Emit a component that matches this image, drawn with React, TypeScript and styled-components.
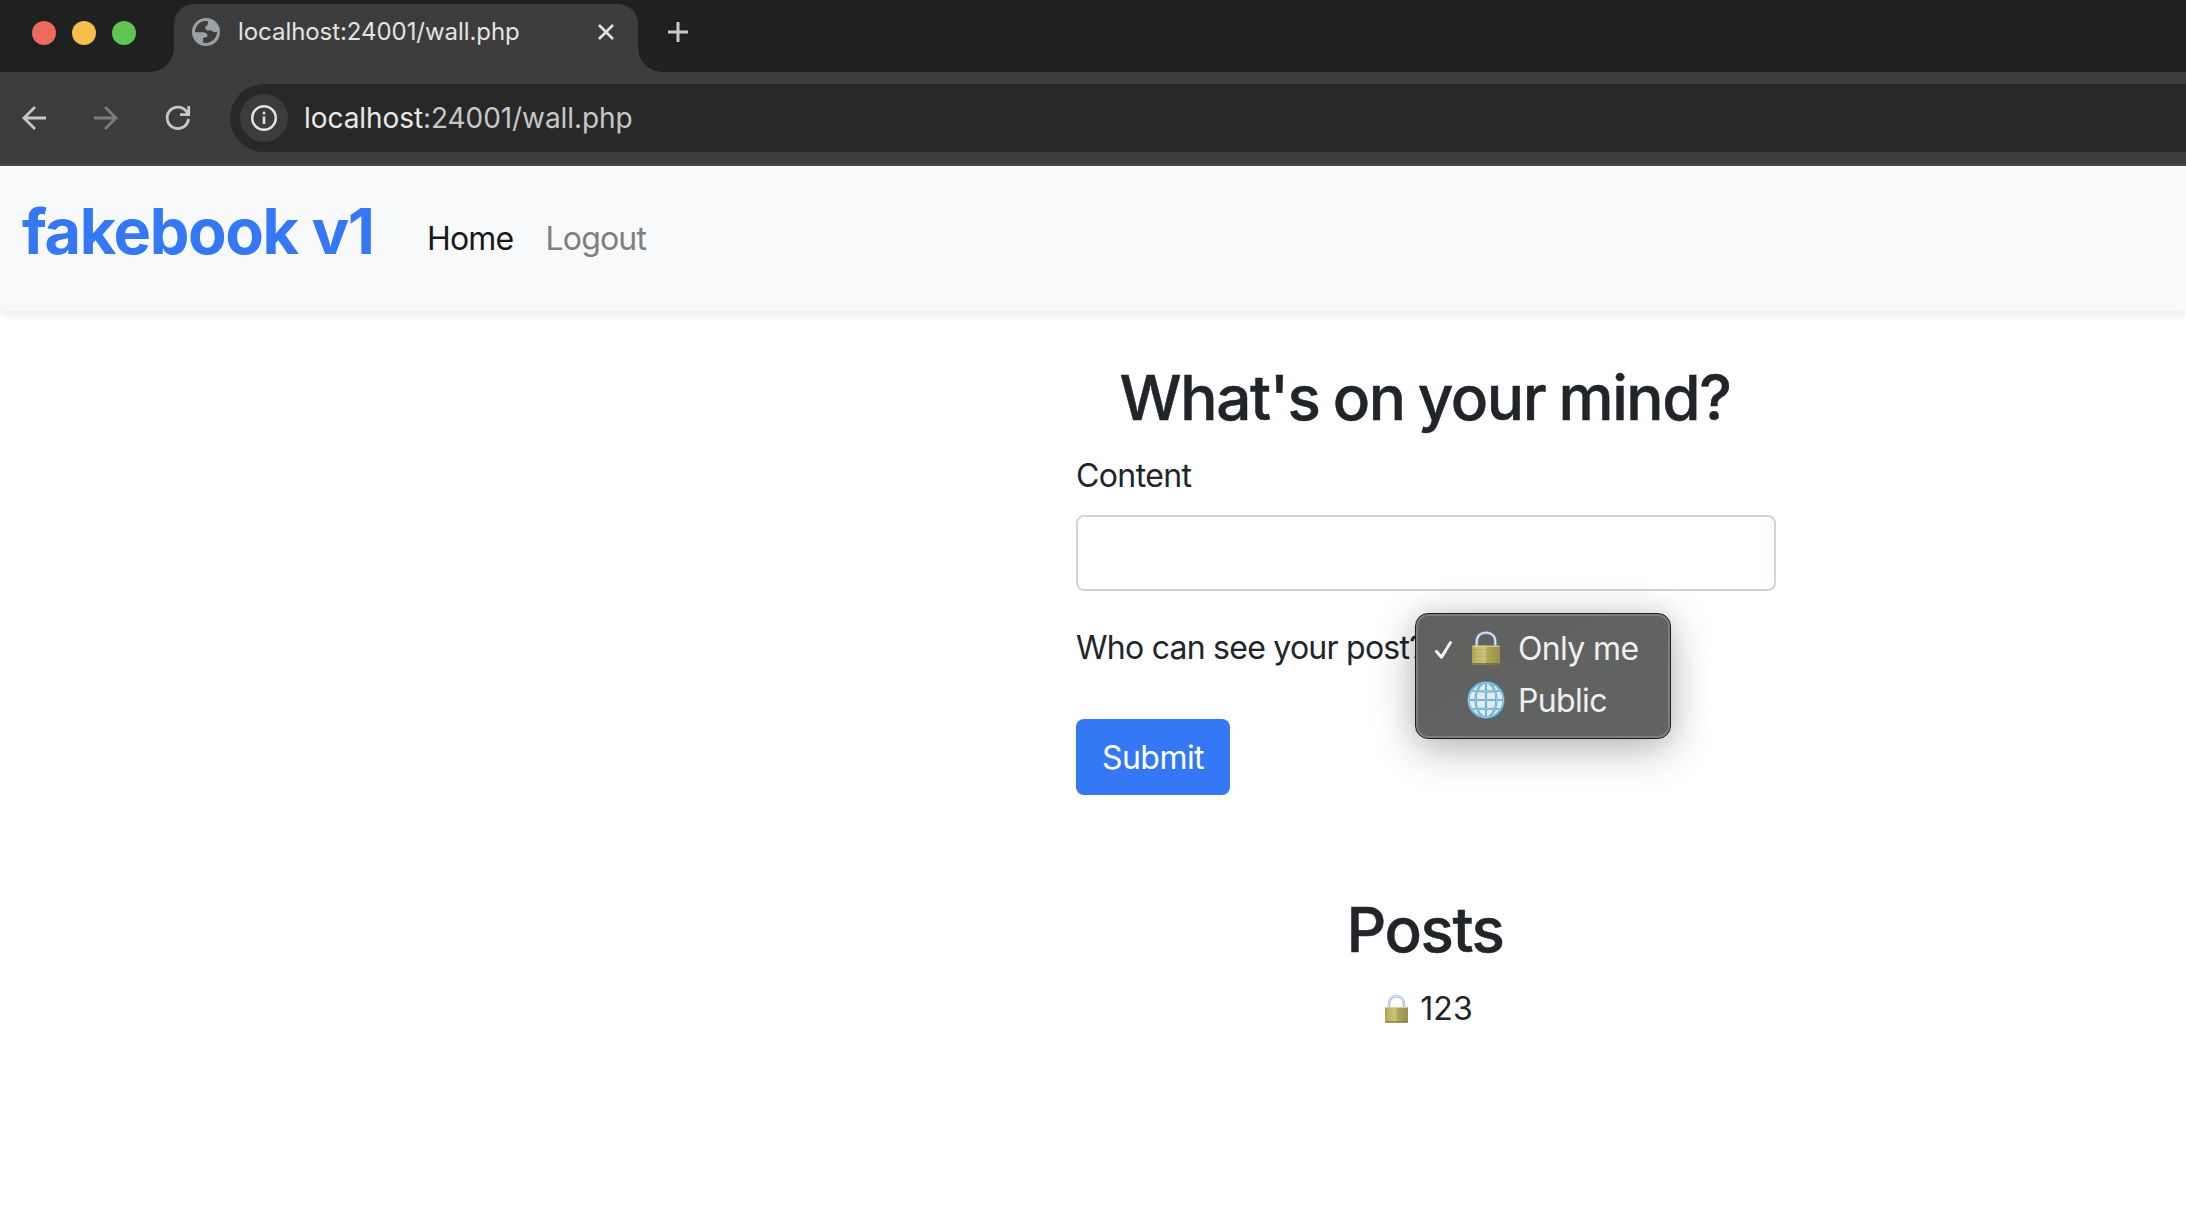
import React from "react";
import styled, { createGlobalStyle } from "styled-components";

const GlobalStyle = createGlobalStyle`
  * { box-sizing: border-box; }
  html, body, #root { margin: 0; padding: 0; height: 100%; }
  body {
    background: #fff;
    color: #212529;
    font-family: Inter, "Liberation Sans", sans-serif;
    font-size: 32px;
    line-height: 48px;
    overflow: hidden;
  }
  svg { display: block; flex: none; }
`;

const Window = styled.div`
  display: flex;
  flex-direction: column;
  width: 100%;
  height: 1210px;
  overflow: hidden;
`;

const TabStrip = styled.header`
  display: flex;
  align-items: flex-start;
  height: 72px;
  padding: 4px 0 0 32px;
  background: #1f2120;
`;

const TrafficLights = styled.div`
  display: flex;
  gap: 16px;
  padding-top: 17px;
  width: 142px;
`;

const Light = styled.span<{ $color: string }>`
  width: 24px;
  height: 24px;
  border-radius: 50%;
  background: ${(p) => p.$color};
`;

const Tab = styled.div`
  position: relative;
  display: flex;
  align-items: center;
  width: 464px;
  height: 68px;
  padding: 0 24px 12px 18px;
  border-radius: 20px 20px 0 0;
  background: #3c3c3c;
  &::before,
  &::after {
    content: "";
    position: absolute;
    bottom: 0;
    width: 24px;
    height: 24px;
  }
  &::before {
    right: 100%;
    background: radial-gradient(circle at 0 0, transparent 23.5px, #3c3c3c 24px);
  }
  &::after {
    left: 100%;
    background: radial-gradient(circle at 100% 0, transparent 23.5px, #3c3c3c 24px);
  }
`;

const TabTitle = styled.span`
  flex: 1;
  margin-left: 18px;
  color: #e3e3e3;
  font-size: 24px;
  line-height: 30px;
  letter-spacing: -0.06px;
  white-space: nowrap;
`;

const NewTab = styled.div`
  padding: 18px 0 0 30px;
`;

const Toolbar = styled.div`
  display: flex;
  align-items: center;
  height: 94px;
  padding-left: 20px;
  background: #3c3c3c;
  border-bottom: 2px solid #4a4848;
`;

const NavIcons = styled.div`
  display: flex;
  gap: 44px;
  width: 210px;
`;

const AddressBar = styled.div`
  display: flex;
  align-items: center;
  flex: 1;
  height: 68px;
  padding-left: 10px;
  border-radius: 34px 0 0 34px;
  background: #282828;
`;

const SiteInfo = styled.div`
  display: grid;
  place-items: center;
  width: 48px;
  height: 48px;
  border-radius: 50%;
  background: #3c3c3c;
`;

const Url = styled.span`
  margin-left: 16px;
  color: #c7c7c7;
  font-size: 28px;
  line-height: 36px;
  letter-spacing: -0.07px;
  b {
    font-weight: 400;
    color: #e8e8e8;
  }
`;

const Navbar = styled.nav`
  position: relative;
  display: flex;
  align-items: flex-start;
  height: 145px;
  padding: 27px 22px 0;
  background: #f8f9fb;
  box-shadow: 0 4px 8px rgba(0, 0, 0, 0.075);
`;

const Brand = styled.a`
  width: 373px;
  color: #3478f6;
  font-size: 63px;
  font-weight: 700;
  line-height: 77px;
  letter-spacing: -1.35px;
  white-space: nowrap;
`;

const NavLinks = styled.div`
  display: flex;
  gap: 32px;
  padding: 22px 0 0 32px;
`;

const NavLink = styled.a<{ $active?: boolean }>`
  color: ${(p) => (p.$active ? "#191919" : "#7f7f80")};
  letter-spacing: -0.8px;
`;

const Main = styled.main`
  width: 700px;
  margin: 48px 0 0 1076px;
`;

const Heading = styled.h2<{ $spaced?: boolean }>`
  margin: ${(p) => (p.$spaced ? "96px 0 17px" : "0 0 16px")};
  padding-right: 2px;
  font-size: 62px;
  font-weight: 500;
  -webkit-text-stroke: 0.5px currentColor;
  line-height: 77px;
  letter-spacing: -1.4px;
  word-spacing: -2px;
  text-align: center;
  white-space: nowrap;
`;

const Label = styled.label<{ $tracking: number }>`
  display: block;
  letter-spacing: ${(p) => p.$tracking}px;
  white-space: nowrap;
`;

const TextInput = styled.input`
  display: block;
  width: 100%;
  height: 76px;
  margin: 15px 0 33px;
  padding: 12px 24px;
  border: 2px solid #ced4da;
  border-radius: 8px;
  background: #fff;
  font: inherit;
  outline: none;
`;

const VisibilityRow = styled.div`
  position: relative;
  height: 48px;
  margin-bottom: 47px;
`;

const Menu = styled.ul`
  position: absolute;
  left: 339px;
  top: -11px;
  width: 256px;
  height: 126px;
  margin: 0;
  padding: 9px 0 0 16px;
  list-style: none;
  border: 1px solid #1c1c1c;
  border-radius: 13px;
  background: linear-gradient(150deg, #605f5d, #616363 60%);
  box-shadow: inset 0 0 0 2px #7e7e7e, 0 10px 44px rgba(0, 0, 0, 0.28), 0 0 24px rgba(0, 0, 0, 0.08);
`;

const Option = styled.li`
  display: grid;
  grid-template-columns: 32px 48px 1fr;
  align-items: center;
  height: 52px;
  color: #efefef;
  letter-spacing: -0.65px;
  white-space: nowrap;
`;

const Glyph = styled.span`
  display: grid;
  justify-items: center;
  width: 42px;
  margin: -2px 0 0 1px;
`;

const OptionText = styled.span`
  padding-left: 6px;
  line-height: 48px;
`;

const Submit = styled.button`
  display: block;
  width: 154px;
  height: 76px;
  padding: 2px 0 0;
  border: 0;
  border-radius: 8px;
  background: #3478f6;
  color: #fff;
  font: inherit;
  letter-spacing: -0.55px;
`;

const Post = styled.div`
  display: flex;
  justify-content: center;
  align-items: center;
  gap: 12px;
  height: 48px;
  padding-left: 6px;
`;

const Lock = ({ size, id }: { size: number; id: string }) => (
  <svg width={size} height={size * 1.22} viewBox="0 0 28 34">
    <defs>
      <linearGradient id={id} x1="0" x2="1">
        <stop offset="0" stopColor="#a9a250" />
        <stop offset="0.12" stopColor="#bdb765" />
        <stop offset="0.47" stopColor="#cdc77f" />
        <stop offset="0.53" stopColor="#b0aa5e" />
        <stop offset="1" stopColor="#98904a" />
      </linearGradient>
    </defs>
    <path d="M4.8 16V11C4.8 5 8.4 1.600 14 1.600S23.200 5 23.200 11V16" fill="none" stroke="#8fa4cc" strokeWidth="3" />
    <path d="M4.600 16V11C4.600 4.900 8.400 1.500 14 1.500S23.400 4.900 23.400 11V16" fill="none" stroke="#dde7f8" strokeWidth="1.500" />
    <rect x="0" y="14.500" width="28" height="19" rx="1" fill={`url(#${id})`} />
    <path d="M0.500 15.200H27.500" stroke="#dcd79a" strokeWidth="1" />
    <path d="M1 18.500H27M1 22H27M1 25.500H27M1 29H27" stroke="#8f8842" strokeOpacity="0.250" strokeWidth="0.800" />
    <path d="M0.500 32.800H27.500" stroke="#766b35" strokeWidth="1.400" />
  </svg>
);

const Globe = () => (
  <svg width="38" height="38" viewBox="0 0 38 38" fill="none">
    <circle cx="19" cy="19" r="17.800" fill="#e6e8ec" />
    <g stroke="#4f9fc6" strokeWidth="2.100">
      <circle cx="19" cy="19" r="17.600" />
      <path d="M19 1V37M1 19H37M4.500 9.500Q19 11.500 33.500 9.500M4.500 28.500Q19 26.500 33.500 28.500" />
      <path d="M16 2C6 10 6 28 16 36M22 2C32 10 32 28 22 36" />
    </g>
    <g stroke="#8fd3ee" strokeWidth="1">
      <circle cx="19" cy="19" r="17.600" />
      <path d="M19 1V37M1 19H37M4.500 9.500Q19 11.500 33.500 9.500M4.500 28.500Q19 26.500 33.500 28.500" />
      <path d="M16 2C6 10 6 28 16 36M22 2C32 10 32 28 22 36" />
    </g>
  </svg>
);

const Favicon = () => (
  <svg width="28" height="28" viewBox="0 0 28 28">
    <circle cx="14" cy="14" r="14" fill="#9aa0a6" />
    <path d="M3 14.200H10.500Q15 14.300 15.600 17.600Q15.200 19.800 11 19.900V24.500A11.200 11.200 0 0 0 25.100 13.600Q22 15.300 19.600 12.500H15.500Q12.600 11.400 13.200 8.600Q16 8 16.200 3.200A11 11 0 0 0 3 14.200Z" fill="#3c3c3c" />
  </svg>
);

export default function App() {
  return (
    <Window>
      <GlobalStyle />
      <TabStrip>
        <TrafficLights>
          <Light $color="#ed6a5e" />
          <Light $color="#f5bf4f" />
          <Light $color="#61c554" />
        </TrafficLights>
        <Tab>
          <Favicon />
          <TabTitle>localhost:24001/wall.php</TabTitle>
          <svg width="16" height="16" viewBox="0 0 16 16" stroke="#e3e3e3" strokeWidth="2.600">
            <path d="M1 1L15 15M15 1L1 15" />
          </svg>
        </Tab>
        <NewTab>
          <svg width="20" height="20" viewBox="0 0 20 20" stroke="#c7c7c7" strokeWidth="3">
            <path d="M10 0V20M0 10H20" />
          </svg>
        </NewTab>
      </TabStrip>
      <Toolbar>
        <NavIcons>
          <svg width="28" height="28" viewBox="0 0 28 28" fill="none" stroke="#c7c7c7" strokeWidth="2.800">
            <path d="M26 14H4M15 3L4 14L15 25" />
          </svg>
          <svg width="28" height="28" viewBox="0 0 28 28" fill="none" stroke="#7c7c7c" strokeWidth="2.800">
            <path d="M2 14H24M13 3L24 14L13 25" />
          </svg>
          <svg width="28" height="28" viewBox="0 0 28 28" fill="none" stroke="#c7c7c7" strokeWidth="2.800">
            <path d="M24.500 15A10.700 10.700 0 1 1 22.500 7.500L25 10M24.700 2V10.700H16" />
          </svg>
        </NavIcons>
        <AddressBar>
          <SiteInfo>
            <svg width="26" height="26" viewBox="0 0 26 26" fill="none" stroke="#e3e3e3">
              <circle cx="13" cy="13" r="11.800" strokeWidth="2.400" />
              <path d="M13 11.500V19M13 6.800V9.400" strokeWidth="2.600" />
            </svg>
          </SiteInfo>
          <Url>
            <b>localhost</b>:24001/wall.php
          </Url>
        </AddressBar>
      </Toolbar>
      <Navbar>
        <Brand>fakebook v1</Brand>
        <NavLinks>
          <NavLink $active>Home</NavLink>
          <NavLink>Logout</NavLink>
        </NavLinks>
      </Navbar>
      <Main>
        <Heading>What's on your mind?</Heading>
        <Label $tracking={-0.6}>Content</Label>
        <TextInput type="text" />
        <VisibilityRow>
          <Label $tracking={-0.75}>Who can see your post?</Label>
          <Menu>
            <Option>
              <svg width="20" height="20" viewBox="0 0 20 20" fill="none" stroke="#f2f2f2" strokeWidth="3" strokeLinecap="round" strokeLinejoin="round">
                <path d="M4.500 12.500L9.500 18.300L18.500 3.500" />
              </svg>
              <Glyph><Lock size={28} id="brass-menu" /></Glyph>
              <OptionText>Only me</OptionText>
            </Option>
            <Option>
              <span />
              <Glyph><Globe /></Glyph>
              <OptionText>Public</OptionText>
            </Option>
          </Menu>
        </VisibilityRow>
        <Submit>Submit</Submit>
        <Heading $spaced>Posts</Heading>
        <Post>
          <Lock size={23} id="brass-post" />
          <span>123</span>
        </Post>
      </Main>
    </Window>
  );
}
